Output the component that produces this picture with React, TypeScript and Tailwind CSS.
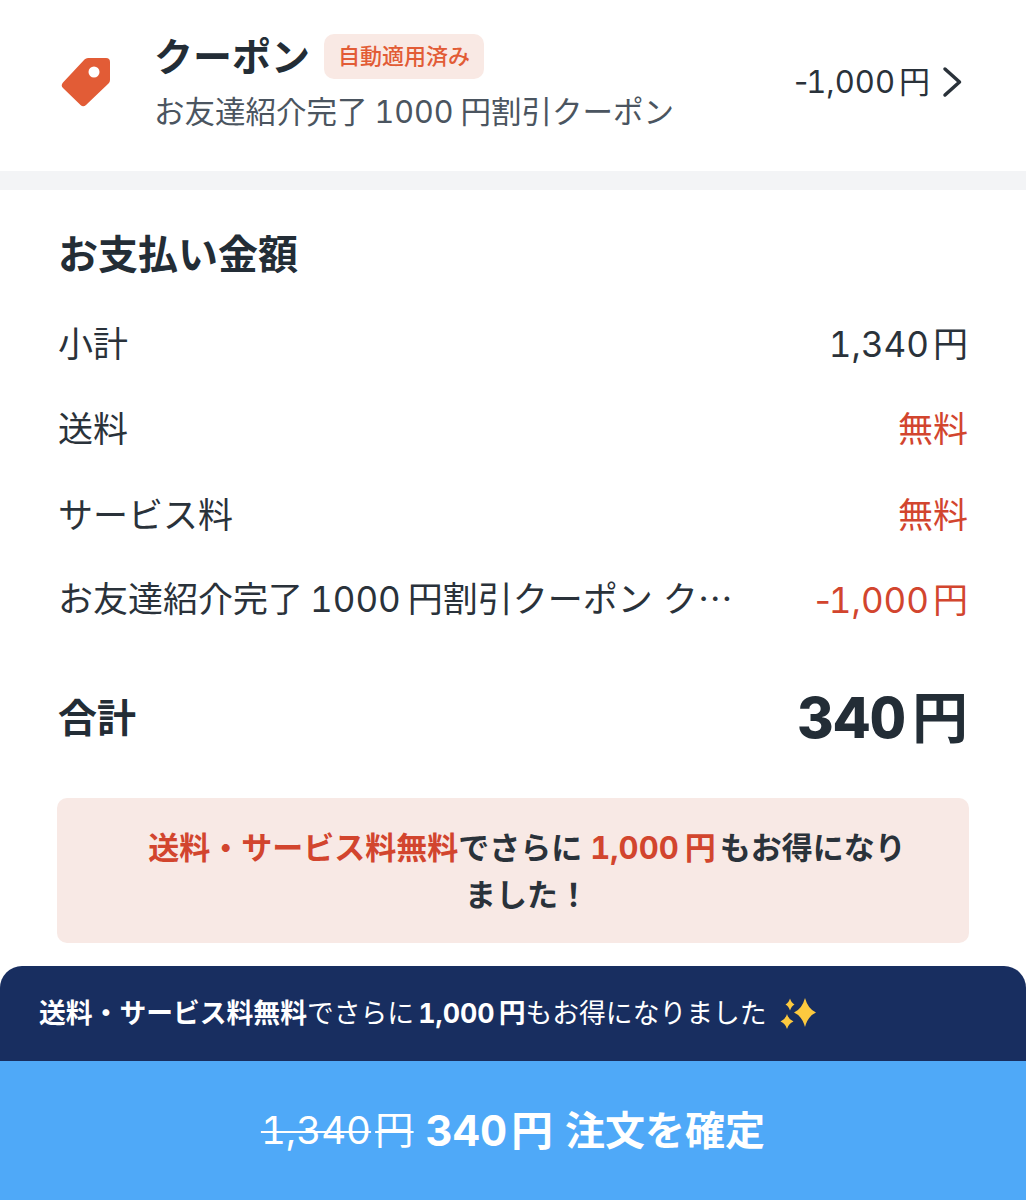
function Yen({ children }: { children: string }) {
  return <span className="ml-[4px]">{children}</span>;
}

function Minus() {
  return <span className="-mr-[2px] [font-variant-numeric:normal]">-</span>;
}

function Row({ label, value, tone, long }: { label: React.ReactNode; value: React.ReactNode; tone?: string; long?: boolean }) {
  return (
    <div className="flex h-[85.5px] items-center justify-between">
      <span className={`mb-[4px] font-['Noto_Sans_CJK_JP','Inter',sans-serif] text-[35px] leading-[48px] text-[#2a323a] ${long ? 'max-w-[680px] truncate [word-spacing:2px]' : ''}`}>{label}</span>
      <span className={`text-[35px] leading-[48px] ${tone ?? 'text-[#2a323a]'}`}>{value}</span>
    </div>
  );
}

function Num({ children }: { children: string }) {
  return <span className="mx-[7px] font-['Inter',sans-serif]">{children}</span>;
}

export default function App() {
  return (
    <div className="flex h-[1200px] w-[1026px] flex-col overflow-hidden bg-white font-['Inter','Noto_Sans_CJK_JP',sans-serif] tabular-nums">
      <section className="flex h-[171px] shrink-0 items-center pb-[7px] pl-[61px] pr-[63px]">
        <svg width="50" height="50" viewBox="0 0 50 50" className="shrink-0">
          <path
            d="M27 1 H45 a4 4 0 0 1 4 4 V23 a5 5 0 0 1 -1.5 3.5 L25 48 a4 4 0 0 1 -5.5 0 L2 31 a4 4 0 0 1 0 -5.5 L23.5 2.5 a5 5 0 0 1 3.5 -1.5 Z"
            fill="#e25c36"
          />
          <circle cx="33" cy="15" r="5.5" fill="#fff" />
        </svg>
        <div className="ml-[43px] flex flex-col">
          <div className="flex items-center">
            <span className="text-[39px] font-bold leading-[45px] text-[#232d36]">クーポン</span>
            <span className="ml-[14px] flex h-[45px] items-center rounded-[10px] bg-[#f9e9e4] px-[14px] text-[22px] font-medium text-[#e25c36]">
              自動適用済み
            </span>
          </div>
          <span className="mt-[15px] text-[30.5px] leading-[36px] text-[#4b5560]">
            お友達紹介完了<Num>1000</Num>円割引クーポン
          </span>
        </div>
        <div className="ml-auto flex items-center">
          <span className="text-[31px] text-[#2a323a]"><Minus />1,000<Yen>円</Yen></span>
          <svg width="22" height="34" viewBox="0 0 22 34" className="ml-[11px]" fill="none" stroke="#2a323a" strokeWidth="3.5" strokeLinecap="round" strokeLinejoin="round">
            <path d="M4 4 L18.5 17 L4 30" />
          </svg>
        </div>
      </section>

      <div className="h-[19px] shrink-0 bg-[#f3f4f6]" />

      <section className="flex flex-1 flex-col px-[58px]">
        <h2 className="mt-[41px] text-[40px] font-bold leading-[48px] text-[#232d36]">お支払い金額</h2>
        <div className="mt-[22px] flex flex-col">
          <Row label="小計" value={<>1,340<Yen>円</Yen></>} />
          <Row label="送料" value="無料" tone="text-[#d2452e]" />
          <Row label="サービス料" value="無料" tone="text-[#d2452e]" />
          <Row
            long
            label={<>お友達紹介完了<Num>1000</Num>円割引クーポン クーポン</>}
            value={<><Minus />1,000<Yen>円</Yen></>}
            tone="text-[#d2452e]"
          />
        </div>
        <div className="mt-[40px] flex h-[70px] items-center justify-between">
          <span className="text-[39px] font-bold text-[#232d36]">合計</span>
          <span className="text-[56px] font-extrabold leading-none text-[#232d36]">340<span className="ml-[6px] font-bold">円</span></span>
        </div>
        <div className="-mx-[1px] mt-[45px] flex h-[145px] items-center justify-center rounded-[10px] bg-[#f8e9e5] pl-[88px] pr-[60px] text-center text-[31px] font-bold leading-[47px] text-[#2a323a]">
          <p>
            <span className="text-[#d2452e]">送料・サービス料無料</span>でさらに<span className="ml-[8px] mr-[4px] text-[#d2452e]">1,000<span className="ml-[6px]">円</span></span>もお得になりました！
          </p>
        </div>
      </section>

      <div className="flex h-[95px] shrink-0 items-center rounded-t-[22px] bg-[#182e60] pl-[39px] text-[26.8px] text-white">
        <b className="font-bold">送料・サービス料無料</b>
        <span>でさらに</span>
        <b className="ml-[4px] font-bold">1,000<Yen>円</Yen></b>
        <span>もお得になりました</span>
        <svg width="38" height="32" viewBox="0 0 38 32" className="ml-[13px]" fill="#fcc93f">
          <path d="M25 0 Q28 11 36 14.5 Q28 18 25 29 Q22 18 14 14.5 Q22 11 25 0 Z" />
          <path d="M10 0.5 Q11.5 5 14.5 6.5 Q11.5 8 10 12.5 Q8.5 8 5.5 6.5 Q8.5 5 10 0.5 Z" />
          <path d="M7 16 Q8.5 21.5 13.5 23.5 Q8.5 25.5 7 31 Q5.5 25.5 0.5 23.5 Q5.5 21.5 7 16 Z" />
        </svg>
      </div>
      <button className="flex h-[139px] shrink-0 items-center justify-center bg-[#4fa9f8] text-white">
        <span className="text-[38.5px] line-through decoration-[2px]">1,340<Yen>円</Yen></span>
        <span className="ml-[12px] text-[42px] font-bold">340<Yen>円</Yen></span>
        <span className="ml-[12px] text-[40px] font-bold">注文を確定</span>
      </button>
    </div>
  );
}
